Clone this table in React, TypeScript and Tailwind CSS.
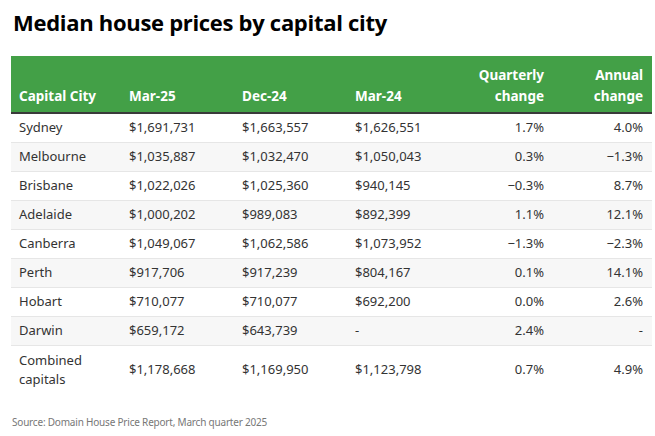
import React from "react";

const rows: string[][] = [
  ["Sydney", "$1,691,731", "$1,663,557", "$1,626,551", "1.7%", "4.0%"],
  ["Melbourne", "$1,035,887", "$1,032,470", "$1,050,043", "0.3%", "\u22121.3%"],
  ["Brisbane", "$1,022,026", "$1,025,360", "$940,145", "\u22120.3%", "8.7%"],
  ["Adelaide", "$1,000,202", "$989,083", "$892,399", "1.1%", "12.1%"],
  ["Canberra", "$1,049,067", "$1,062,586", "$1,073,952", "\u22121.3%", "\u22122.3%"],
  ["Perth", "$917,706", "$917,239", "$804,167", "0.1%", "14.1%"],
  ["Hobart", "$710,077", "$710,077", "$692,200", "0.0%", "2.6%"],
  ["Darwin", "$659,172", "$643,739", "-", "2.4%", "-"],
];

const cols = "grid grid-cols-[110px_113px_113px_113px_92px_100px]";

export default function App() {
  return (
    <div className="w-[655px] h-[436px] bg-white relative overflow-hidden" style={{ fontFamily: '"Open Sans", "Noto Sans", sans-serif' }}>
      <div className="pl-[13px] pt-[6px] h-[56px]">
        <h1 className="text-[22px] font-bold text-black leading-[32px] tracking-[-0.3px]" style={{ fontFamily: '"Open Sans", sans-serif' }}>
          Median house prices by capital city
        </h1>
      </div>
      <div className="ml-[11px] w-[641px]" style={{ fontFamily: '"Noto Sans", sans-serif' }}>
        <div className={`${cols} bg-[#43a047] h-[58px] border-b-2 border-[#3a3a3a] text-white font-bold text-[13.5px] leading-[21px] items-end pb-[5px]`}>
          <div className="pl-[8px]">Capital City</div>
          <div className="pl-[8px]">Mar-25</div>
          <div className="pl-[8px]">Dec-24</div>
          <div className="pl-[8px]">Mar-24</div>
          <div className="text-right pr-[8px]">Quarterly<br />change</div>
          <div className="text-right pr-[9px]">Annual<br />change</div>
        </div>
        {rows.map((r, i) => (
          <div key={i} className={`${cols} h-[29px] items-center border-b border-[#e6e6e6] text-[#333] text-[13px] ${i % 2 === 1 ? "bg-[#f7f7f7]" : "bg-white"}`}>
            <div className="pl-[8px]">{r[0]}</div>
            <div className="pl-[8px]">{r[1]}</div>
            <div className="pl-[8px]">{r[2]}</div>
            <div className="pl-[8px]">{r[3]}</div>
            <div className="text-right pr-[8px]">{r[4]}</div>
            <div className="text-right pr-[9px]">{r[5]}</div>
          </div>
        ))}
        <div className={`${cols} h-[47px] items-center text-[#333] text-[13px] leading-[19px] bg-white`}>
          <div className="pl-[8px]">Combined<br />capitals</div>
          <div className="pl-[8px]">$1,178,668</div>
          <div className="pl-[8px]">$1,169,950</div>
          <div className="pl-[8px]">$1,123,798</div>
          <div className="text-right pr-[8px]">0.7%</div>
          <div className="text-right pr-[9px]">4.9%</div>
        </div>
      </div>
      <div className="pl-[12px] pt-[22px] text-[10px] tracking-[-0.2px] text-[#777]" style={{ fontFamily: '"Noto Sans", sans-serif' }}>
        Source: Domain House Price Report, March quarter 2025
      </div>
    </div>
  );
}
